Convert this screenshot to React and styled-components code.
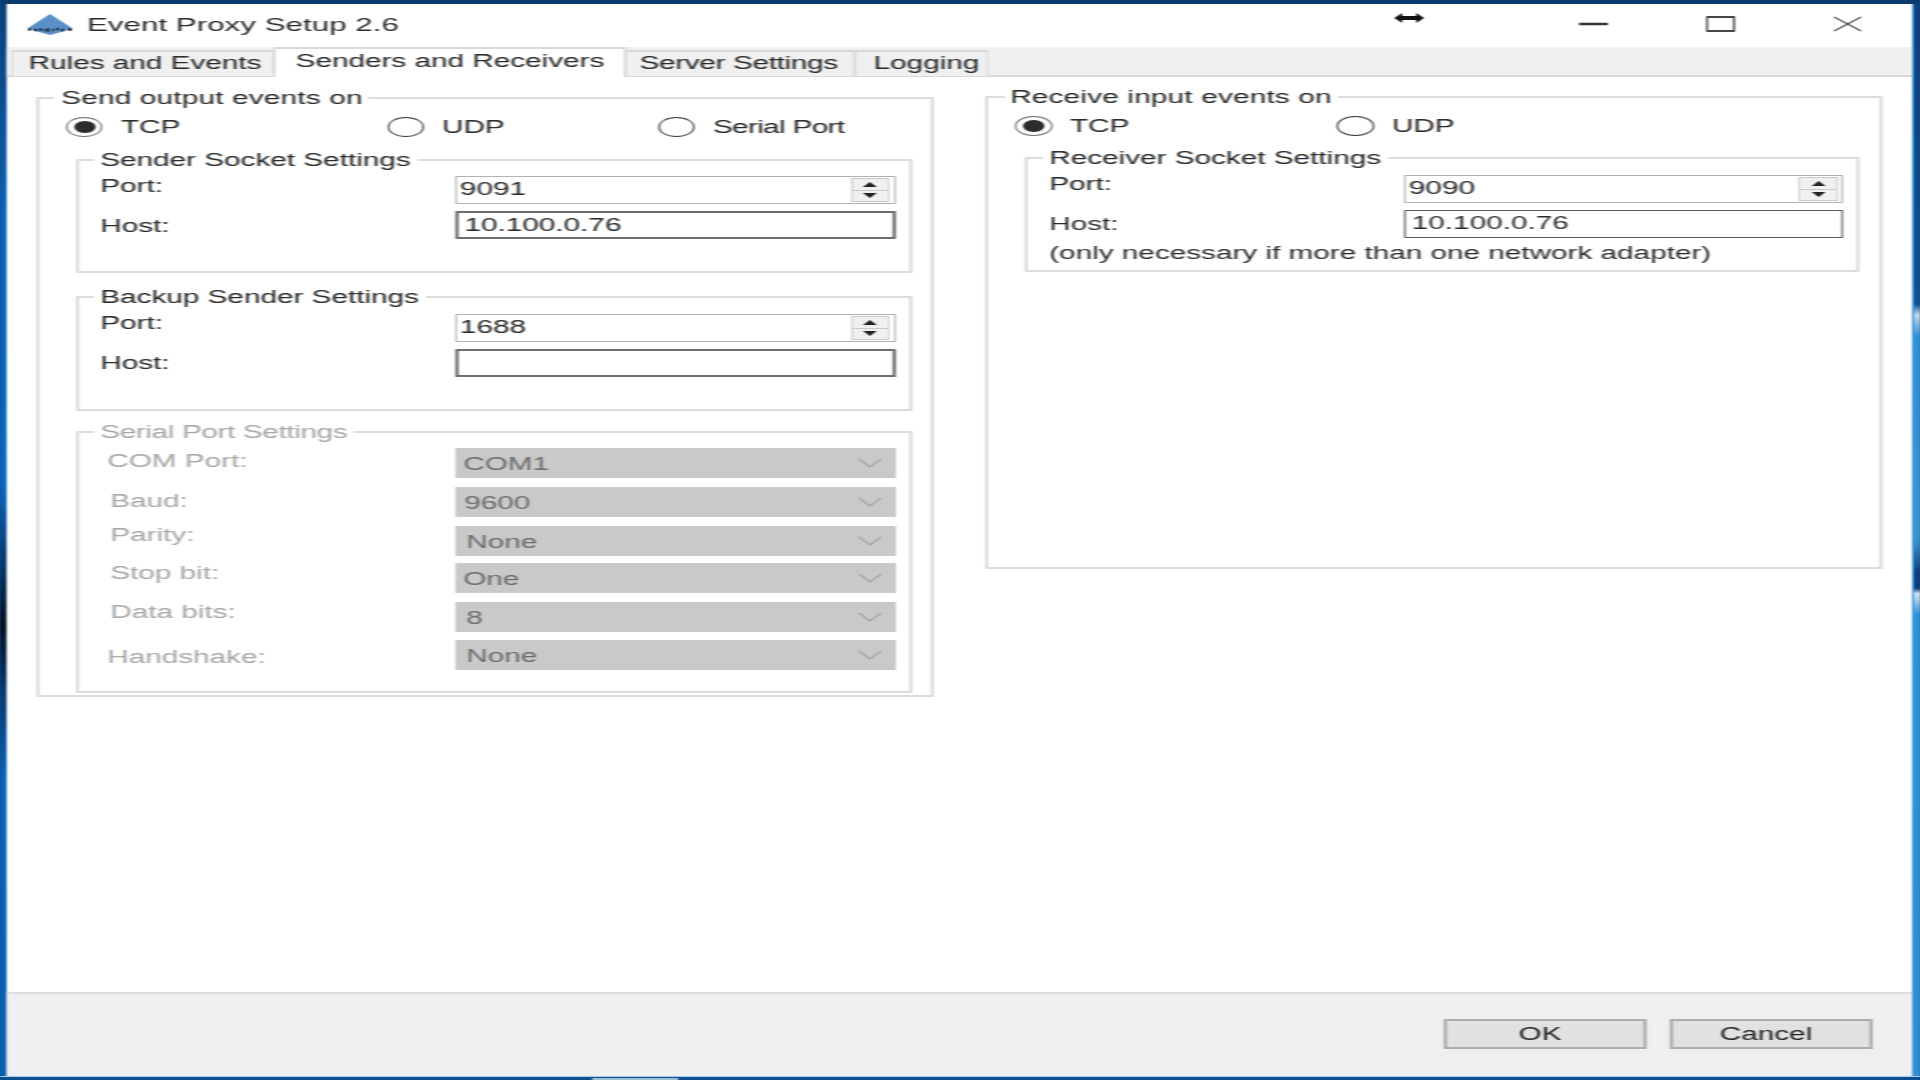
import React from "react";
import styled, { createGlobalStyle } from "styled-components";

// the whole capture is stretched sideways, so the page is laid out narrow and scaled back up
const STRETCH = 1.65;
const px = (n) => `${+(n / STRETCH).toFixed(2)}px`;

const GlobalStyle = createGlobalStyle`
  html, body {
    margin: 0;
    width: 1920px;
    height: 1080px;
    overflow: hidden;
    background: #0b4f94;
  }
  *, *::before, *::after {
    box-sizing: border-box;
  }
`;

function App() {
  return (
    <>
      <GlobalStyle />
      <Stage>
        <TopEdge />
        <Middle>
          <LeftEdge />
          <Window>
            <TitleBar>
              <AppLogo />
              <Title>Event Proxy Setup 2.6</Title>
              <ResizeCursor />
              <WindowControls />
            </TitleBar>
            <TabStrip>
              <Tab $pad={15} $width={262}>Rules and Events</Tab>
              <Tab $active $pad={20} $width={352}>Senders and Receivers</Tab>
              <Tab $pad={12} $spacing={-0.2} $width={229}>Server Settings</Tab>
              <Tab $pad={17} $width={134}>Logging</Tab>
            </TabStrip>
            <Content>
              <OuterGroup $top={11} $height={609}>
                <OuterLegend>Send output events on</OuterLegend>
                <RadioRow $top={9}>
                  <Radio checked label="TCP" width={321} />
                  <Radio label="UDP" width={271} />
                  <Radio label="Serial Port" tight />
                </RadioRow>
                <InnerGroup $top={13} $height={123}>
                  <InnerLegend>Sender Socket Settings</InnerLegend>
                  <Row $top={6}>
                    <FieldLabel>Port:</FieldLabel>
                    <NumberField value="9091" />
                  </Row>
                  <Row $top={7}>
                    <FieldLabel $nudge={5}>Host:</FieldLabel>
                    <TextField>10.100.0.76</TextField>
                  </Row>
                </InnerGroup>
                <InnerGroup $top={14} $height={124}>
                  <InnerLegend>Backup Sender Settings</InnerLegend>
                  <Row $top={7}>
                    <FieldLabel $nudge={-1}>Port:</FieldLabel>
                    <NumberField value="1688" />
                  </Row>
                  <Row $top={7}>
                    <FieldLabel $nudge={4}>Host:</FieldLabel>
                    <TextField />
                  </Row>
                </InnerGroup>
                <InnerGroup $top={11} $height={271} $disabled>
                  <InnerLegend $spacing={-0.22}>Serial Port Settings</InnerLegend>
                  {serialRows.map((row) => (
                    <Row key={row.label} $top={row.top} $height={30}>
                      <FieldLabel $disabled $nudge={row.nudge} $indent={row.indent}>
                        {row.label}
                      </FieldLabel>
                      <Select>
                        <SelectValue $pad={row.pad}>{row.value}</SelectValue>
                        <Chevron />
                      </Select>
                    </Row>
                  ))}
                </InnerGroup>
              </OuterGroup>
              <OuterGroup $top={10} $height={482} $wide>
                <OuterLegend>Receive input events on</OuterLegend>
                <RadioRow $top={9}>
                  <Radio checked label="TCP" width={322} />
                  <Radio label="UDP" />
                </RadioRow>
                <InnerGroup $top={12} $height={124}>
                  <InnerLegend>Receiver Socket Settings</InnerLegend>
                  <Row $top={7}>
                    <FieldLabel $nudge={-1}>Port:</FieldLabel>
                    <NumberField value="9090" />
                  </Row>
                  <Row $top={7}>
                    <FieldLabel $nudge={4}>Host:</FieldLabel>
                    <TextField $thin>10.100.0.76</TextField>
                  </Row>
                  <Note>(only necessary if more than one network adapter)</Note>
                </InnerGroup>
              </OuterGroup>
            </Content>
            <Footer>
              <DialogButton>OK</DialogButton>
              <DialogButton>Cancel</DialogButton>
            </Footer>
          </Window>
          <RightEdge />
        </Middle>
        <BottomEdge>
          <TaskbarBump />
        </BottomEdge>
      </Stage>
    </>
  );
}

const serialRows = [
  { label: "COM Port:", value: "COM1", top: 6, nudge: 3, indent: 7, pad: 8 },
  { label: "Baud:", value: "9600", top: 9, nudge: 4, indent: 10, pad: 9 },
  { label: "Parity:", value: "None", top: 9, nudge: -1, indent: 10, pad: 11 },
  { label: "Stop bit:", value: "One", top: 7, nudge: 0, indent: 10, pad: 8 },
  { label: "Data bits:", value: "8", top: 9, nudge: 0, indent: 10, pad: 11 },
  { label: "Handshake:", value: "None", top: 8, nudge: 7, indent: 7, pad: 11 },
];

function Radio({ checked, label, width, tight }) {
  return (
    <RadioItem $width={width} $tight={tight}>
      <RadioCircle $checked={checked}>{checked && <RadioDot />}</RadioCircle>
      <span>{label}</span>
    </RadioItem>
  );
}

function NumberField({ value }) {
  return (
    <NumberBox>
      <NumberValue>{value}</NumberValue>
      <Spinner>
        <SpinButton>
          <Triangle up />
        </SpinButton>
        <SpinButton>
          <Triangle />
        </SpinButton>
      </Spinner>
    </NumberBox>
  );
}

function Triangle({ up }) {
  return (
    <svg width={px(14)} height="5" viewBox="0 0 14 5" preserveAspectRatio="none">
      <polygon points={up ? "7,0 14,5 0,5" : "0,0 14,0 7,5"} fill="#222" />
    </svg>
  );
}

function Chevron() {
  return (
    <ChevronIcon viewBox="0 0 24 10" preserveAspectRatio="none">
      <polyline points="1,1 12,9 23,1" fill="none" stroke="#9c9c9c" strokeWidth="1.4" />
    </ChevronIcon>
  );
}

function AppLogo() {
  return (
    <LogoIcon viewBox="0 0 44 21" preserveAspectRatio="none">
      <polygon points="22,0 44,14 37,17 22,21 7,17 0,14" fill="#5b8fc8" />
      <path
        d="M0 15.5h3M6 16h3M11 15.5h3M16 16h2M20 14v4M24 16h2M28 15h3M33 16h3M40 15.5h4"
        stroke="#23303f"
        strokeWidth="2.4"
        fill="none"
      />
    </LogoIcon>
  );
}

function ResizeCursor() {
  return (
    <CursorIcon viewBox="0 0 30 10" preserveAspectRatio="none">
      <path d="M0 5 8 0v3h14V0l8 5-8 5V7H8v3z" fill="#111" />
    </CursorIcon>
  );
}

function WindowControls() {
  return (
    <Controls>
      <ControlIcon viewBox="0 0 28 16" preserveAspectRatio="none">
        <line x1="0" y1="8" x2="28" y2="8" stroke="#333" strokeWidth="2.4" />
      </ControlIcon>
      <ControlIcon viewBox="0 0 28 16" preserveAspectRatio="none">
        <rect x="1" y="1" width="26" height="14" fill="none" stroke="#333" strokeWidth="1.8" />
      </ControlIcon>
      <ControlIcon viewBox="0 0 28 16" preserveAspectRatio="none">
        <path d="M1 1 27 15M27 1 1 15" fill="none" stroke="#333" strokeWidth="1.3" />
      </ControlIcon>
    </Controls>
  );
}

const Stage = styled.div`
  display: flex;
  flex-direction: column;
  width: ${px(1920)};
  height: 1080px;
  transform: scaleX(${STRETCH});
  transform-origin: 0 0;
  filter: blur(0.5px);
  font-family: "Liberation Sans", Arial, sans-serif;
  font-size: 18px;
  color: #2b2b2b;
`;

const TopEdge = styled.div`
  height: 4px;
  background: #0b3a6d;
`;

const Middle = styled.div`
  display: flex;
  flex: 1;
  min-height: 0;
`;

const LeftEdge = styled.div`
  width: ${px(7)};
  background: linear-gradient(
    180deg,
    #0a3f78 0,
    #0b62b4 20%,
    #0a66bd 45%,
    #07386d 52%,
    #05101f 58%,
    #07386d 64%,
    #0a62b4 72%,
    #0a5fae 100%
  );
`;

const RightEdge = styled.div`
  width: ${px(8)};
  border-left: 1px solid #3a97e0;
  background: linear-gradient(
    180deg,
    #0d3f78 0,
    #0f4f8f 28%,
    #c6d8e6 29%,
    #2f90d4 31%,
    #3d93cc 50%,
    #0e3e78 53%,
    #0e3e78 54.5%,
    #d7e5ef 55%,
    #2f90d4 57%,
    #2f8ed2 100%
  );
`;

const BottomEdge = styled.div`
  display: flex;
  height: 4px;
  padding-left: ${px(592)};
  border-top: 1px solid #a8cfee;
  background: #0f4f90;
`;

const TaskbarBump = styled.div`
  width: ${px(86)};
  height: 2px;
  margin-top: 1px;
  background: #9dbfd6;
`;

const Window = styled.div`
  display: flex;
  flex: 1;
  flex-direction: column;
  min-width: 0;
  background: #ffffff;
`;

const TitleBar = styled.div`
  position: relative;
  display: flex;
  align-items: center;
  height: 43px;
  padding-left: ${px(21)};
`;

const LogoIcon = styled.svg`
  flex: none;
  width: ${px(44)};
  height: 21px;
  margin-top: -2px;
`;

const Title = styled.div`
  margin-left: ${px(15)};
  margin-top: -1px;
  font-size: 19px;
  line-height: 24px;
`;

const CursorIcon = styled.svg`
  position: absolute;
  top: 9px;
  left: ${px(1388)};
  width: ${px(30)};
  height: 10px;
`;

const Controls = styled.div`
  display: flex;
  align-items: center;
  gap: ${px(98)};
  margin-left: auto;
  margin-top: -3px;
  padding-right: ${px(50)};
`;

const ControlIcon = styled.svg`
  display: block;
  width: ${px(29)};
  height: 16px;
`;

const TabStrip = styled.div`
  display: flex;
  align-items: flex-end;
  height: 30px;
  padding-left: ${px(5)};
  background: #f0f0f0;
  border-bottom: 2px solid #d9d9d9;
`;

const Tab = styled.div`
  flex: none;
  width: ${(p) => px(p.$width)};
  height: ${(p) => (p.$active ? "30px" : "26px")};
  margin-bottom: ${(p) => (p.$active ? "-2px" : "-1px")};
  padding-left: ${(p) => px(p.$pad)};
  border: solid #d9d9d9;
  border-width: 2px 1.5px 0;
  background: ${(p) => (p.$active ? "#ffffff" : "#f0f0f0")};
  letter-spacing: ${(p) => p.$spacing || 0}px;
  line-height: ${(p) => (p.$active ? "24px" : "23px")};
  white-space: nowrap;
`;

const Content = styled.div`
  display: flex;
  flex: 1;
  align-items: flex-start;
  gap: ${px(50.5)};
  min-height: 0;
  padding-left: ${px(30)};
`;

const GroupBase = styled.fieldset`
  display: block;
  min-width: 0;
  margin: 0;
  padding: 0;
  border: 2px solid #dcdcdc;
`;

const OuterGroup = styled(GroupBase)`
  flex: none;
  width: ${(p) => px(p.$wide ? 899 : 897)};
  height: ${(p) => p.$height}px;
  margin-top: ${(p) => p.$top}px;
  padding: 0 ${(p) => px(p.$wide ? 20.7 : 19)} 0 ${(p) => px(p.$wide ? 1.5 : 0)};
`;

const OuterLegend = styled.legend`
  margin-left: ${px(15)};
  padding: 0 ${px(6)};
  letter-spacing: 0.12px;
  line-height: 20px;
  white-space: nowrap;
`;

const InnerLegend = styled.legend`
  margin-left: ${px(-6)};
  padding: 0 ${px(6)};
  letter-spacing: ${(p) => p.$spacing || 0}px;
  line-height: 20px;
  white-space: nowrap;
`;

const InnerGroup = styled(GroupBase)`
  height: ${(p) => p.$height}px;
  margin: ${(p) => p.$top}px 0 0 ${px(35)};
  padding: 0 ${px(12.7)} 0 ${px(21.7)};
  color: ${(p) => (p.$disabled ? "#a8a8a8" : "inherit")};
`;

const RadioRow = styled.div`
  display: flex;
  align-items: center;
  height: 20px;
  margin: ${(p) => p.$top}px 0 0 ${px(25.7)};
`;

const RadioItem = styled.label`
  display: flex;
  flex: none;
  align-items: center;
  gap: ${px(18)};
  width: ${(p) => (p.$width ? px(p.$width) : "auto")};
  letter-spacing: ${(p) => (p.$tight ? "-0.4px" : "0")};
  line-height: 20px;
`;

const RadioCircle = styled.span`
  display: flex;
  flex: none;
  align-items: center;
  justify-content: center;
  width: ${px(37)};
  height: 20px;
  border: 1.7px solid ${(p) => (p.$checked ? "#6f6f6f" : "#3a3a3a")};
  border-radius: 50%;
  background: #ffffff;
`;

const RadioDot = styled.span`
  width: ${px(21)};
  height: 12px;
  border-radius: 50%;
  background: #2c2c2c;
`;

const Row = styled.div`
  display: flex;
  height: ${(p) => p.$height || 28}px;
  margin-top: ${(p) => p.$top}px;
`;

const FieldLabel = styled.div`
  flex: none;
  width: ${px(355)};
  margin-top: ${(p) => p.$nudge || 0}px;
  padding-left: ${(p) => px(p.$indent || 0)};
  color: ${(p) => (p.$disabled ? "#a8a8a8" : "inherit")};
  line-height: 20px;
`;

const NumberBox = styled.div`
  display: flex;
  flex: 1;
  align-items: center;
  border: 1.5px solid #b2b2b2;
  background: #ffffff;
`;

const NumberValue = styled.div`
  flex: 1;
  padding: 0 0 3px ${px(3)};
  line-height: 20px;
`;

const Spinner = styled.div`
  display: flex;
  flex: none;
  flex-direction: column;
  width: ${px(39)};
  height: 24px;
  margin-right: ${px(4)};
  border: 1px solid #c9c9c9;
`;

const SpinButton = styled.div`
  display: flex;
  flex: 1;
  align-items: center;
  justify-content: center;
  background: #f0f0f0;
  & + & {
    border-top: 1px solid #c9c9c9;
  }
`;

const TextField = styled.div`
  flex: 1;
  padding-left: ${px(6)};
  border: ${(p) => (p.$thin ? "1.5px solid #5c5c5c" : "2px solid #6e6e6e")};
  background: #ffffff;
  line-height: 24px;
`;

const Select = styled.div`
  display: flex;
  flex: 1;
  align-items: center;
  background: #c9c9c9;
`;

const SelectValue = styled.div`
  flex: 1;
  padding: 1px 0 0 ${(p) => px(p.$pad)};
  color: #6e6e6e;
  line-height: 20px;
`;

const ChevronIcon = styled.svg`
  flex: none;
  width: ${px(24)};
  height: 10px;
  margin-right: ${px(14)};
`;

const Note = styled.div`
  margin-top: 5px;
  line-height: 20px;
  white-space: nowrap;
`;

const Footer = styled.div`
  display: flex;
  flex: none;
  align-items: flex-start;
  justify-content: flex-end;
  gap: ${px(22)};
  height: 84px;
  padding: 25px ${px(39)} 0 0;
  border-top: 2px solid #dcdcdc;
  background: #efefef;
`;

const DialogButton = styled.div`
  width: ${px(204)};
  height: 30px;
  padding-right: ${px(10)};
  border: 2px solid #adadad;
  background: #e1e1e1;
  color: #222222;
  line-height: 26px;
  text-align: center;
`;

export default App;
